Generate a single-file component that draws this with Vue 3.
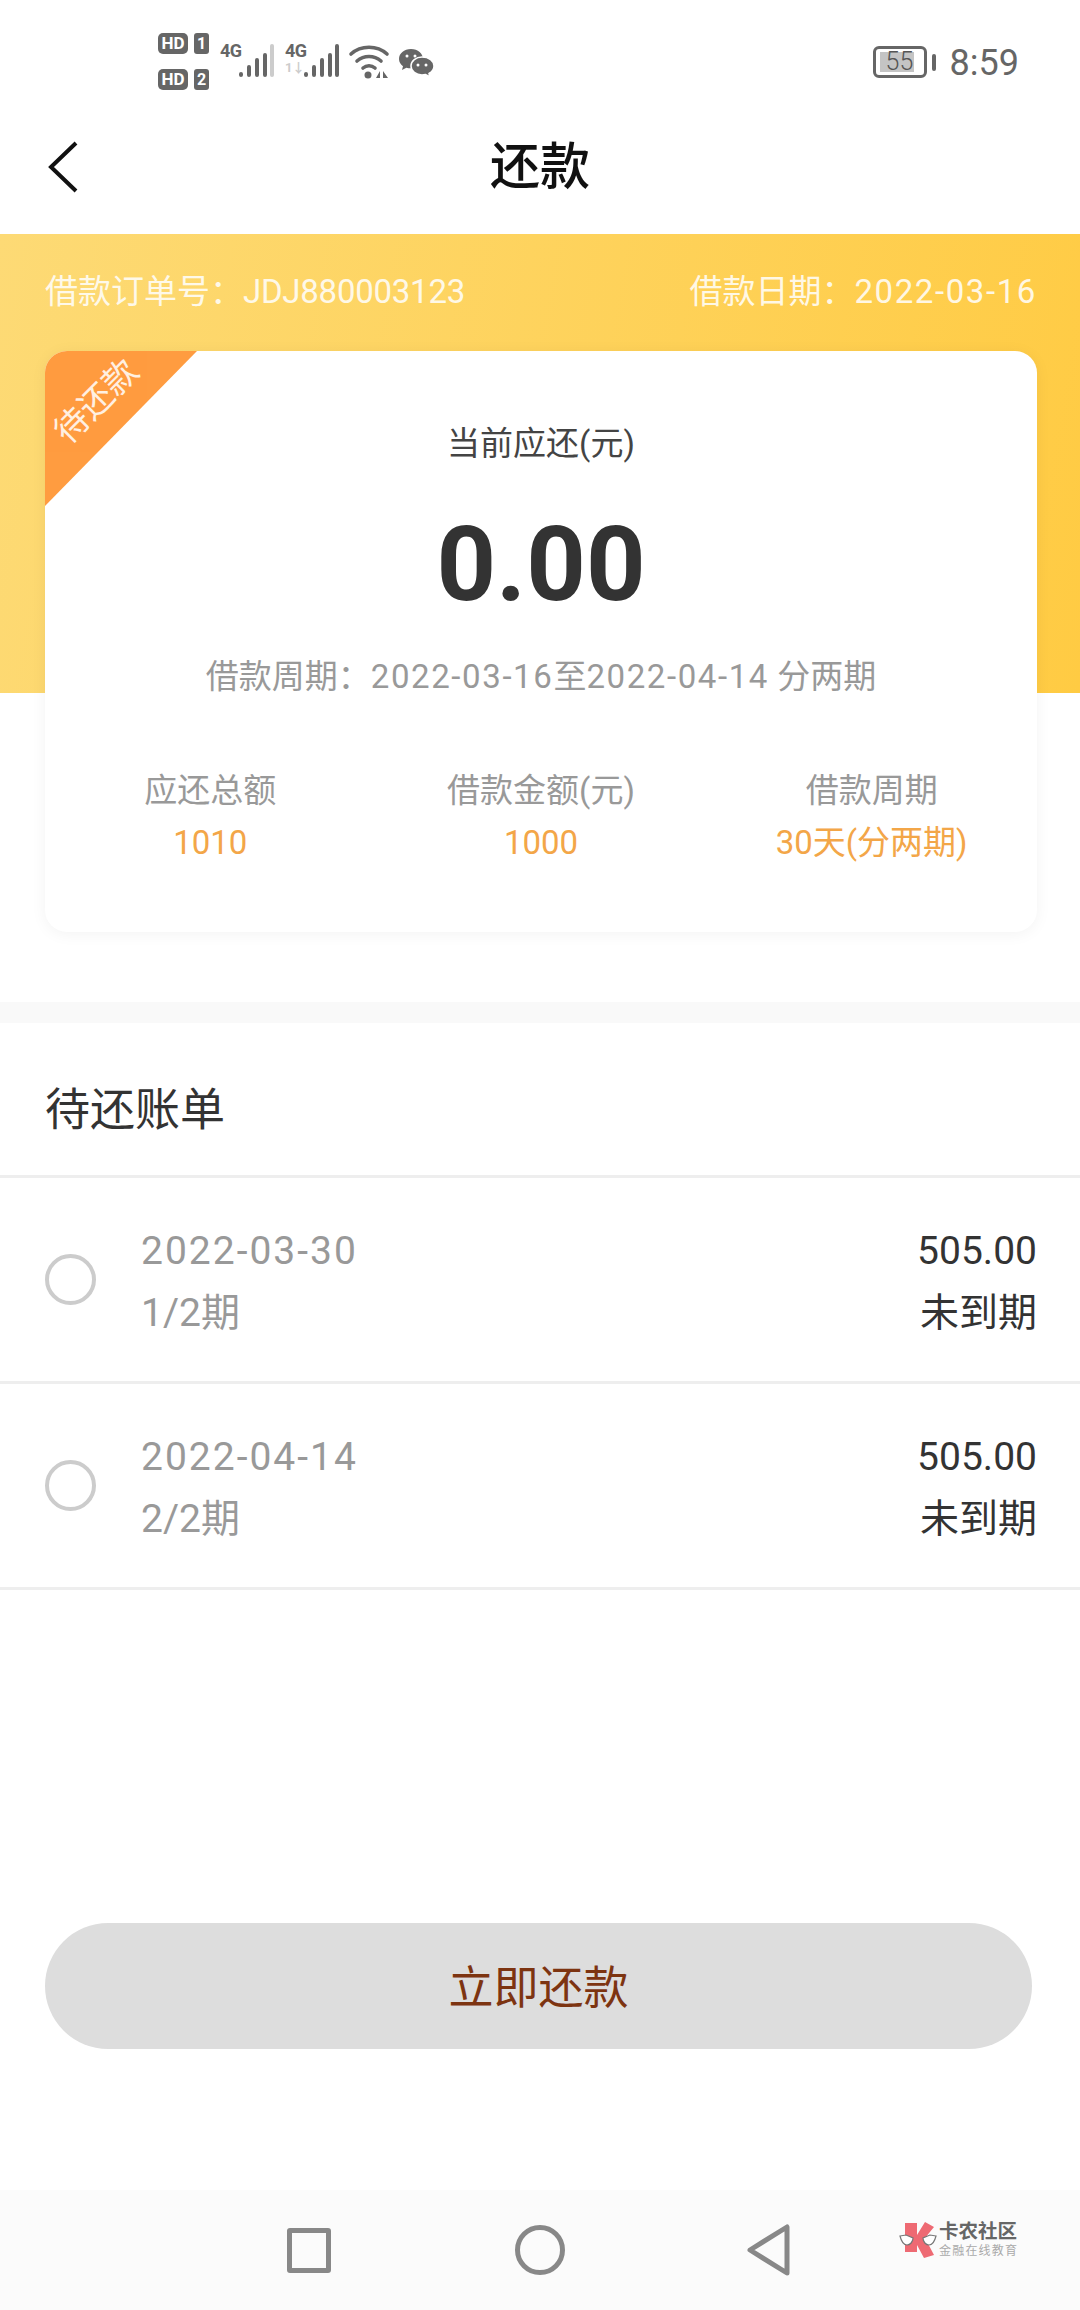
<script setup>
const bills = [
  { date: '2022-03-30', term: '1/2期', amount: '505.00', state: '未到期' },
  { date: '2022-04-14', term: '2/2期', amount: '505.00', state: '未到期' }
]

const stats = [
  { label: '应还总额', value: '1010' },
  { label: '借款金额(元)', value: '1000' },
  { label: '借款周期', value: '30天(分两期)' }
]
</script>

<template>
  <div class="page">
    <div class="status-bar">
      <div class="status-left">
        <div class="hd-col">
          <div class="hd-row"><span class="hd">HD</span><span class="sim">1</span></div>
          <div class="hd-row"><span class="hd">HD</span><span class="sim">2</span></div>
        </div>
        <div class="signal">
          <span class="net">4G</span>
          <svg width="36" height="34" viewBox="0 0 36 34">
            <g stroke-width="4" stroke-linecap="round" fill="none" stroke="#666">
              <path d="M3 31v-1M11 31v-8M19 31v-15M27 31v-20" />
              <path d="M34 31V2" stroke="#ccc" />
            </g>
          </svg>
        </div>
        <div class="signal second">
          <span class="net">4G<i class="updown">1↓</i></span>
          <svg width="36" height="34" viewBox="0 0 36 34">
            <g stroke-width="4" stroke-linecap="round" fill="none" stroke="#666">
              <path d="M3 31v-1M11 31v-8M19 31v-15M27 31v-20M34 31V2" />
            </g>
          </svg>
        </div>
        <svg class="wifi" width="42" height="36" viewBox="0 0 42 36">
          <g fill="none" stroke="#666" stroke-width="3.6" stroke-linecap="round">
            <path d="M3 10c10-9 26-9 36 0" />
            <path d="M9 17c7-6 17-6 24 0" />
            <path d="M15 24c3.500-3 8.500-3 12 0" />
          </g>
          <circle cx="20" cy="31" r="3.500" fill="#666" />
          <path d="M28 34l4-7v7zM35 27l5 7h-5z" fill="#666" />
        </svg>
        <svg class="wechat" width="36" height="30" viewBox="0 0 36 30">
          <path d="M13 1C6 1 1 5.500 1 11c0 3 1.600 5.500 4 7.300L4 22l4.400-2.300c1.400.4 3 .6 4.600.6 7 0 12-4 12-9.300S20 1 13 1z" fill="#666" />
          <path d="M24 9c-6 0-11 4-11 9s5 9 11 9c1.300 0 2.500-.2 3.600-.5L32 29l-1-3.500c3-1.700 5-4.400 5-7.500 0-5-5-9-12-9z" fill="#666" stroke="#fff" stroke-width="1.500" />
          <circle cx="9" cy="8" r="1.500" fill="#fff" />
          <circle cx="17" cy="8" r="1.500" fill="#fff" />
          <circle cx="20" cy="17" r="1.500" fill="#fff" />
          <circle cx="28" cy="17" r="1.500" fill="#fff" />
        </svg>
      </div>
      <div class="status-right">
        <div class="battery">
          <div class="battery-body"><span class="battery-fill"></span><span class="battery-num">55</span></div>
          <span class="battery-tip"></span>
        </div>
        <span class="clock">8:59</span>
      </div>
    </div>

    <div class="nav">
      <svg class="back" width="34" height="54" viewBox="0 0 34 54">
        <path d="M30 3L5 27l25 24" fill="none" stroke="#111" stroke-width="4" />
      </svg>
      <span class="nav-title">还款</span>
    </div>

    <div class="hero">
      <div class="hero-head">
        <span>借款订单号：<span class="order-no">JDJ880003123</span></span>
        <span>借款日期：<span class="date-sm">2022-03-16</span></span>
      </div>
      <div class="card">
        <div class="ribbon"></div>
        <span class="ribbon-text">待还款</span>
        <div class="card-label">当前应还(元)</div>
        <div class="card-amount">0.00</div>
        <div class="card-period">借款周期：<span class="date-sm">2022-03-16</span>至<span class="date-sm">2022-04-14</span> 分两期</div>
        <div class="stats">
          <div v-for="s in stats" :key="s.label" class="stat">
            <div class="stat-label">{{ s.label }}</div>
            <div class="stat-value">{{ s.value }}</div>
          </div>
        </div>
      </div>
    </div>

    <div class="band"></div>

    <div class="bill-title">待还账单</div>
    <div class="bills">
      <div v-for="b in bills" :key="b.date" class="bill">
        <span class="radio"></span>
        <div class="bill-left">
          <div class="bill-date">{{ b.date }}</div>
          <div>{{ b.term }}</div>
        </div>
        <div class="bill-right">
          <div>{{ b.amount }}</div>
          <div>{{ b.state }}</div>
        </div>
      </div>
    </div>

    <div class="spacer"></div>
    <button class="pay" type="button">立即还款</button>
    <div class="spacer-2"></div>

    <div class="sys-nav">
      <span class="sys-square"></span>
      <span class="sys-circle"></span>
      <svg class="sys-back" width="46" height="52" viewBox="0 0 46 52">
        <path d="M41 3v46L4 26z" fill="none" stroke="#888" stroke-width="5" stroke-linejoin="round" />
      </svg>
      <div class="mark">
        <svg width="38" height="38" viewBox="0 0 38 38">
          <path d="M6 2h12v12L26 1l9 5-9 11 9 17-10 3-7-13v7H6z" fill="#ee6a73" />
          <path d="M1 15l6-1 7 3c0 4-3 7-6 7-4 0-6-5-7-9zM37 15l-6-1-7 3c0 4 3 7 6 7 4 0 6-5 7-9z" fill="#fff" stroke="#777" stroke-width="1.200" />
        </svg>
        <div class="mark-text">
          <span class="mark-name">卡农社区</span>
          <span class="mark-sub">金融在线教育</span>
        </div>
      </div>
    </div>
  </div>
</template>

<style scoped>
.page {
  width: 1080px;
  height: 2310px;
  display: flex;
  flex-direction: column;
  background: #fff;
  overflow: hidden;
  font-family: Roboto, "Noto Sans CJK SC", sans-serif;
  color: #333;
}

.status-bar {
  height: 110px;
  flex: none;
  display: flex;
  justify-content: space-between;
  align-items: flex-start;
  padding: 26px 61px 0 158px;
  box-sizing: border-box;
}
.status-left {
  display: flex;
  align-items: flex-start;
}
.hd-col {
  display: flex;
  flex-direction: column;
  gap: 15px;
  padding-top: 7px;
}
.hd-row {
  display: flex;
  gap: 6px;
}
.hd {
  width: 30px;
  height: 21px;
  border-radius: 5px;
  background: #666;
  color: #fff;
  font-size: 17px;
  font-weight: 700;
  line-height: 21px;
  text-align: center;
}
.sim {
  width: 15px;
  height: 21px;
  border-radius: 3px;
  background: #666;
  color: #fff;
  font-size: 16px;
  font-weight: 700;
  line-height: 21px;
  text-align: center;
}
.signal {
  display: flex;
  align-items: flex-end;
  margin-left: 11px;
  height: 54px;
  position: relative;
  width: 54px;
}
.signal svg {
  position: absolute;
  right: 0;
  bottom: 2px;
}
.signal.second {
  margin-left: 11px;
}
.net {
  position: absolute;
  left: 0;
  top: 15px;
  font-size: 18px;
  font-weight: 700;
  color: #666;
  line-height: 20px;
  letter-spacing: -0.5px;
}
.updown {
  display: block;
  font-style: normal;
  font-size: 13px;
  font-weight: 700;
  line-height: 13px;
  color: #ccc;
}
.wifi {
  margin: 18px 0 0 9px;
}
.wechat {
  margin: 22px 0 0 8px;
}
.status-right {
  display: flex;
  align-items: center;
  padding-top: 14px;
}
.battery {
  display: flex;
  align-items: center;
  gap: 5px;
}
.battery-body {
  width: 54px;
  height: 32px;
  box-sizing: border-box;
  border: 3px solid #666;
  border-radius: 6px;
  position: relative;
  display: flex;
  align-items: center;
}
.battery-fill {
  width: 34px;
  height: 20px;
  margin-left: 4px;
  background: #c4c4c4;
}
.battery-num {
  position: absolute;
  left: 10px;
  top: 0;
  font-size: 25px;
  font-weight: 300;
  line-height: 26px;
  color: #555;
}
.battery-tip {
  width: 4px;
  height: 17px;
  border-radius: 2px;
  background: #666;
}
.clock {
  margin: 2px 0 0 14px;
  font-size: 36px;
  line-height: 42px;
  color: #666;
}

.nav {
  height: 124px;
  flex: none;
  position: relative;
  display: flex;
  align-items: center;
  justify-content: center;
  padding-bottom: 20px;
  box-sizing: border-box;
}
.back {
  position: absolute;
  left: 46px;
  top: 30px;
}
.nav-title {
  font-size: 50px;
  font-weight: 500;
  color: #111;
}

.hero {
  flex: none;
  padding: 0 43px 0 45px;
  height: 768px;
  background: linear-gradient(100deg, #fdda75 0%, #ffcb43 100%) no-repeat;
  background-size: 100% 459px;
}
.hero-head {
  display: flex;
  justify-content: space-between;
  height: 117px;
  padding-bottom: 8px;
  box-sizing: border-box;
  align-items: center;
  font-size: 33px;
  color: #fff;
  opacity: 0.85;
}
.order-no {
  letter-spacing: -0.25px;
}
.date-sm {
  letter-spacing: 1.6px;
}
.card {
  position: relative;
  height: 581px;
  box-sizing: border-box;
  padding-top: 71px;
  background: #fff;
  border-radius: 22px;
  box-shadow: 0 2px 16px rgba(0, 0, 0, 0.05);
  text-align: center;
  overflow: hidden;
}
.ribbon {
  position: absolute;
  left: 0;
  top: 0;
  width: 152px;
  height: 155px;
  background: #ff9c40;
  clip-path: polygon(0 0, 100% 0, 0 100%);
}
.ribbon-text {
  position: absolute;
  left: 0;
  top: 30px;
  width: 102px;
  font-size: 34px;
  line-height: 40px;
  color: #fff;
  transform: rotate(-45deg);
  opacity: 0.85;
}
.card-label {
  font-size: 33px;
  line-height: 44px;
  color: #444;
}
.card-amount {
  margin-top: 39px;
  font-size: 104px;
  font-weight: 700;
  line-height: 120px;
  color: #333;
}
.card-period {
  margin-top: 30px;
  font-size: 33px;
  line-height: 44px;
  color: #999;
}
.stats {
  margin-top: 70px;
  display: grid;
  grid-template-columns: repeat(3, 1fr);
}
.stat-label {
  font-size: 33px;
  line-height: 44px;
  color: #999;
}
.stat-value {
  margin-top: 8px;
  font-size: 33px;
  line-height: 44px;
  color: #f3a648;
}

.band {
  height: 21px;
  flex: none;
  background: #f9f9f9;
}
.bill-title {
  height: 152px;
  flex: none;
  box-sizing: border-box;
  padding: 0 45px;
  line-height: 176px;
  font-size: 45px;
  color: #333;
}
.bills {
  flex: none;
  border-top: 3px solid #eee;
}
.bill {
  height: 203px;
  display: flex;
  align-items: center;
  padding: 0 43px 0 45px;
  border-bottom: 3px solid #eee;
  font-size: 39px;
  line-height: 62px;
}
.radio {
  width: 51px;
  height: 51px;
  box-sizing: border-box;
  border: 4px solid #ccc;
  border-radius: 50%;
  flex: none;
}
.bill-left {
  margin-left: 45px;
  padding-top: 5px;
  color: #999;
  flex: 1;
}
.bill-date {
  letter-spacing: 2px;
}
.bill-right {
  padding-top: 5px;
  text-align: right;
  color: #333;
}

.spacer {
  height: 333px;
  flex: none;
}
.pay {
  flex: none;
  width: 987px;
  height: 126px;
  margin-left: 45px;
  border: none;
  border-radius: 63px;
  background: #ddd;
  color: #7d3411;
  font-family: inherit;
  font-size: 45px;
  padding: 0 0 4px;
}
.spacer-2 {
  flex: 1;
}

.sys-nav {
  height: 120px;
  flex: none;
  background: #fbfbfb;
  display: flex;
  align-items: center;
  position: relative;
}
.sys-square {
  width: 44px;
  height: 45px;
  margin-left: 287px;
  box-sizing: border-box;
  border: 5px solid #888;
  border-radius: 3px;
}
.sys-circle {
  width: 50px;
  height: 50px;
  margin-left: 184px;
  box-sizing: border-box;
  border: 5px solid #888;
  border-radius: 50%;
}
.sys-back {
  margin-left: 181px;
}
.mark {
  position: absolute;
  left: 899px;
  top: 30px;
  display: flex;
  gap: 2px;
  align-items: center;
}
.mark-text {
  display: flex;
  flex-direction: column;
}
.mark-name {
  font-size: 19.500px;
  line-height: 24px;
  font-weight: 700;
  color: #666;
}
.mark-sub {
  font-size: 12px;
  line-height: 15px;
  letter-spacing: 1.200px;
  color: #aaa;
}
</style>
